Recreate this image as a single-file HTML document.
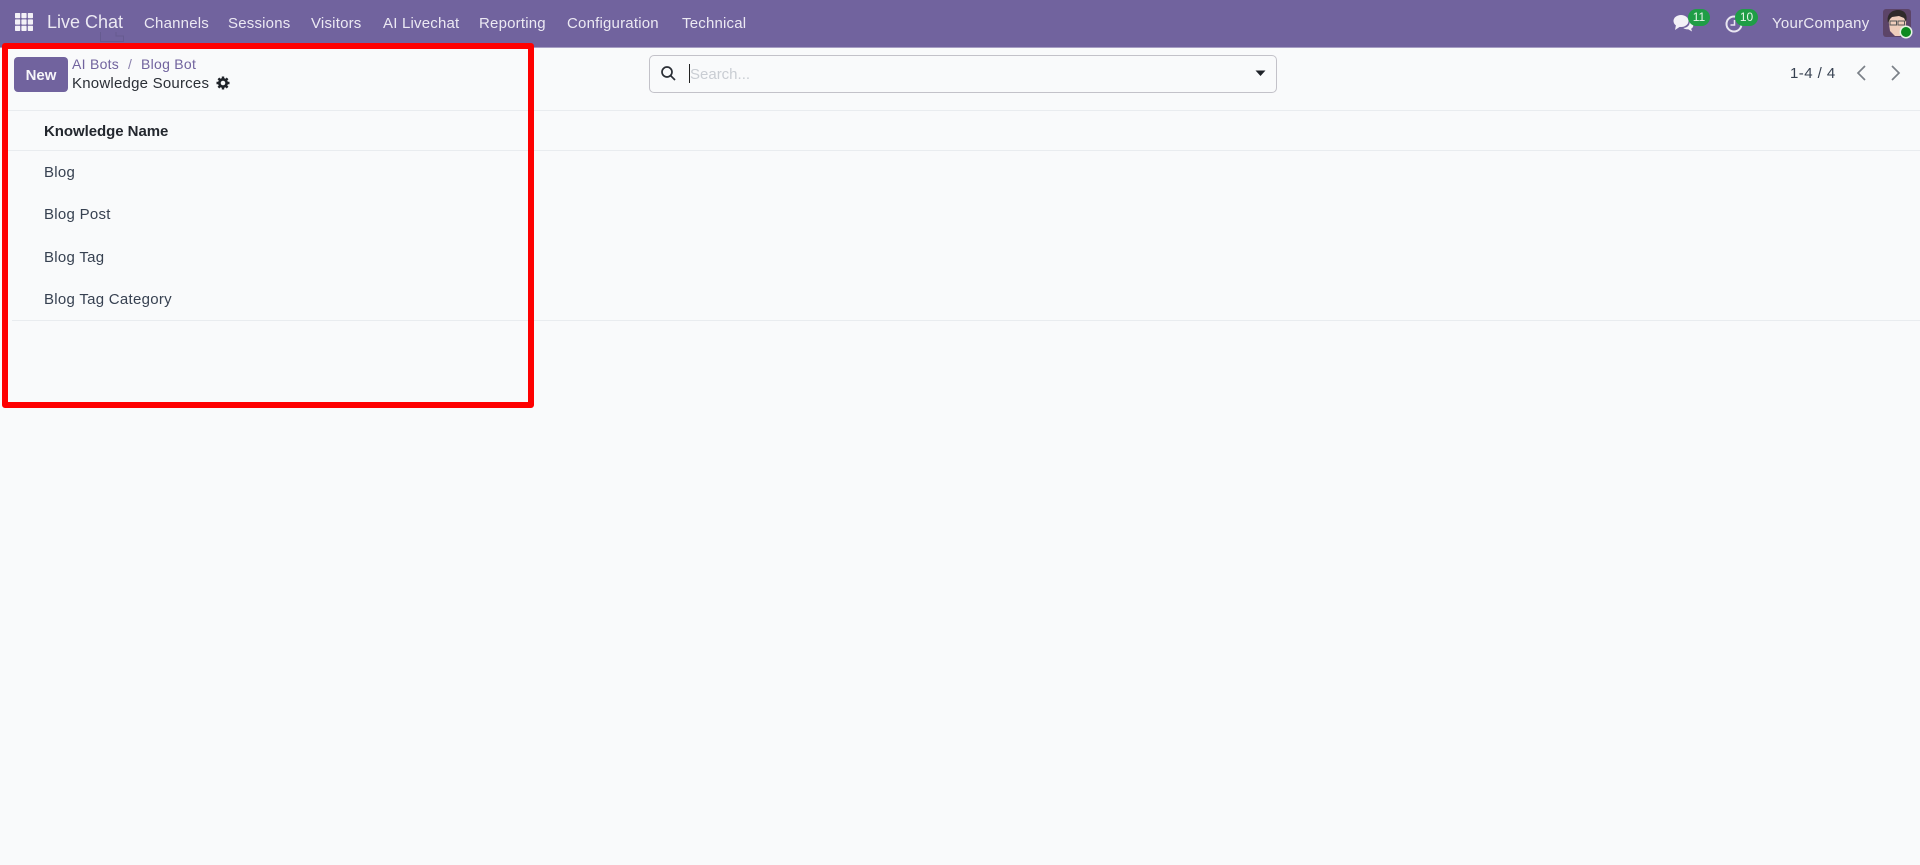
<!DOCTYPE html>
<html lang="en">
<head>
<meta charset="utf-8">
<title>Knowledge Sources</title>
<style>
html,body{margin:0;padding:0;width:1920px;height:865px;overflow:hidden;background:#f9fafb;font-family:"Liberation Sans",sans-serif;color:#374151}
#page{position:absolute;left:0;top:0;width:1920px;height:865px;filter:blur(.35px)}
.t{position:absolute;white-space:nowrap;line-height:20px;font-size:15px;letter-spacing:.28px}
.nav{position:absolute;left:0;top:0;width:1920px;height:47px;background:#71639e;border-bottom:1px solid #a79fc4;box-sizing:content-box}
.n{color:#ece9f3;top:13.500px;font-size:15px;letter-spacing:.2px}
.line{position:absolute;height:1px;background:#e9ecef}
.badge{position:absolute;background:#1f9d46;color:#e8f5ea;border-radius:9px;font-size:12px;text-align:center;line-height:17px;height:17px}
#red{position:absolute;left:2px;top:43px;width:532px;height:365px;box-sizing:border-box;border:6px solid #fe0000;border-radius:3px}
</style>
</head>
<body>
<div id="page">
<div class="nav"></div>

<svg style="position:absolute;left:15px;top:13px" width="18" height="18" viewBox="0 0 18 18" fill="#f3f1f7">
<rect x="0" y="0" width="5.200" height="5.200" rx=".7"/><rect x="6.400" y="0" width="5.200" height="5.200" rx=".7"/><rect x="12.800" y="0" width="5.200" height="5.200" rx=".7"/>
<rect x="0" y="6.400" width="5.200" height="5.200" rx=".7"/><rect x="6.400" y="6.400" width="5.200" height="5.200" rx=".7"/><rect x="12.800" y="6.400" width="5.200" height="5.200" rx=".7"/>
<rect x="0" y="12.800" width="5.200" height="5.200" rx=".7"/><rect x="6.400" y="12.800" width="5.200" height="5.200" rx=".7"/><rect x="12.800" y="12.800" width="5.200" height="5.200" rx=".7"/>
</svg>
<div class="t n" style="left:47px;top:12px;font-size:18px;letter-spacing:0">Live Chat</div>
<div class="t n" style="left:144px">Channels</div>
<div class="t n" style="left:228px">Sessions</div>
<div class="t n" style="left:311px">Visitors</div>
<div class="t n" style="left:383px">AI Livechat</div>
<div class="t n" style="left:479px">Reporting</div>
<div class="t n" style="left:567px">Configuration</div>
<div class="t n" style="left:682px">Technical</div>

<svg style="position:absolute;left:100px;top:32px" width="24" height="10" viewBox="0 0 24 10" fill="none" stroke="#665b90" stroke-width="1"><path d="M.5 0V9.500H23.500V4H16V0"/></svg>

<svg style="position:absolute;left:1673px;top:14px" width="21" height="18" viewBox="0 0 21 18" fill="#f3f1f7">
<ellipse cx="8" cy="7" rx="7.500" ry="6"/><path d="M3 11 L2 16 L8 12Z"/>
<path d="M16.500 6.500c2.500 1 3.800 2.800 3.800 4.700 0 1.500-.8 2.800-2.200 3.600l1 2.700-4-2.200c-1.800.1-3.500-.3-4.800-1.300 4.300-.2 7.300-3.300 6.200-7.500z"/>
</svg>
<div class="badge" style="left:1688px;top:9px;width:22px">11</div>
<svg style="position:absolute;left:1724px;top:14px" width="20" height="20" viewBox="0 0 20 20" fill="none" stroke="#e9e6f1" stroke-width="2"><circle cx="10" cy="10" r="7.500"/><path d="M10.500 6V11H6.500" stroke-width="1.500"/></svg>
<div class="badge" style="left:1735px;top:9px;width:23px">10</div>
<div class="t n" style="left:1772px;letter-spacing:.28px">YourCompany</div>

<svg style="position:absolute;left:1883px;top:8px" width="32" height="32" viewBox="0 0 32 32">
<rect x="0" y="1" width="28" height="28" rx="3" fill="#5c4468"/>
<path d="M6 16C5 8 9 4 15 4s9 4 8 11l-1 8-5 5H12L7 23z" fill="#efcdbb"/>
<path d="M5 15C3 6 9 2 15 2c7 0 10 5 8 12l-2-4-5-2-7 1-2 2z" fill="#2f2a2a"/>
<rect x="7" y="13" width="6.500" height="4" fill="none" stroke="#555" stroke-width="1"/>
<rect x="15" y="13" width="6.500" height="4" fill="none" stroke="#555" stroke-width="1"/>
<circle cx="23" cy="24" r="6.500" fill="#e6f3e6"/><circle cx="23" cy="24" r="5" fill="#0b8a1f"/>
</svg>

<div style="position:absolute;left:14px;top:57px;width:54px;height:35px;background:#71639e;border-radius:4px;color:#f6f5f9;font-size:15px;font-weight:bold;text-align:center;line-height:37px;">New</div>
<div class="t" style="left:72px;top:54px;font-size:14px;color:#71639e">AI Bots</div>
<div class="t" style="left:128px;top:54px;font-size:14px;color:#8a80ad">/</div>
<div class="t" style="left:141px;top:54px;font-size:14px;color:#71639e">Blog Bot</div>
<div class="t" style="left:72px;top:74px;font-size:15px;color:#2b2f36;letter-spacing:.22px">Knowledge Sources</div>
<svg style="position:absolute;left:216px;top:76px" width="14" height="14" viewBox="0 0 14 14"><circle cx="7" cy="7" r="3.700" fill="none" stroke="#1f2329" stroke-width="2.600"/><path d="M7 .5V13.500M.5 7H13.500M2.400 2.400L11.600 11.600M11.600 2.400L2.400 11.600" stroke="#1f2329" stroke-width="2.400"/><circle cx="7" cy="7" r="2.300" fill="#f9fafb"/></svg>

<div style="position:absolute;left:649px;top:55px;width:628px;height:38px;box-sizing:border-box;border:1px solid #c3c2c9;border-radius:5px"></div>
<svg style="position:absolute;left:660px;top:65px" width="17" height="17" viewBox="0 0 17 17" fill="none" stroke="#2b2f36" stroke-width="1.700"><circle cx="7" cy="7" r="5"/><path d="M10.700 10.700L15 15"/></svg>
<div style="position:absolute;left:689px;top:64px;width:1px;height:19px;background:#222"></div>
<div class="t" style="left:690px;top:65px;font-size:15px;color:#c9cdd3;letter-spacing:0">Search...</div>
<svg style="position:absolute;left:1255px;top:70px" width="11" height="7" viewBox="0 0 11 7"><path d="M.5 0.500H10.500L5.500 6z" fill="#1f2329"/></svg>

<div class="t" style="left:1790px;top:64px;font-size:15px;color:#374151;letter-spacing:.45px">1-4 / 4</div>
<svg style="position:absolute;left:1854px;top:63px" width="14" height="20" viewBox="0 0 14 20" fill="none" stroke="#7b8088" stroke-width="1.700"><path d="M11 3L4 10L11 17"/></svg>
<svg style="position:absolute;left:1889px;top:63px" width="14" height="20" viewBox="0 0 14 20" fill="none" stroke="#7b8088" stroke-width="1.700"><path d="M3 3L10 10L3 17"/></svg>

<div class="line" style="left:7px;top:110px;width:1913px"></div>
<div class="line" style="left:7px;top:150px;width:1913px"></div>
<div class="line" style="left:12px;top:320px;width:1908px"></div>

<div class="t" style="left:44px;top:122px;font-size:15px;font-weight:bold;color:#23272e;letter-spacing:-.05px">Knowledge Name</div>
<div class="t" style="left:44px;top:163px">Blog</div>
<div class="t" style="left:44px;top:205px">Blog Post</div>
<div class="t" style="left:44px;top:248px">Blog Tag</div>
<div class="t" style="left:44px;top:290px">Blog Tag Category</div>

<div id="red"></div>
</div>
</body>
</html>
